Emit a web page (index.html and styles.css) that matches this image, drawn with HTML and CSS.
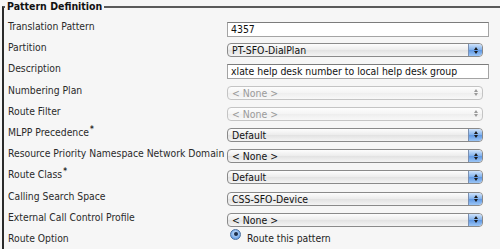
FILE: index.html
```html
<!DOCTYPE html>
<html>
<head>
<meta charset="utf-8">
<link rel="stylesheet" href="styles.css">
</head>
<body>
<fieldset class="panel">
  <legend class="legend">Pattern Definition</legend>
  <div class="form">
    <div class="label">Translation Pattern</div>
    <div class="field"><div class="input">4357</div></div>

    <div class="label">Partition</div>
    <div class="field"><div class="select"><span class="val">PT-SFO-DialPlan</span><span class="btn"><span class="up"></span><span class="down"></span></span></div></div>

    <div class="label">Description</div>
    <div class="field"><div class="input">xlate help desk number to local help desk group</div></div>

    <div class="label">Numbering Plan</div>
    <div class="field"><div class="select disabled"><span class="val">&lt; None &gt;</span><span class="btn"><span class="up"></span><span class="down"></span></span></div></div>

    <div class="label">Route Filter</div>
    <div class="field"><div class="select disabled"><span class="val">&lt; None &gt;</span><span class="btn"><span class="up"></span><span class="down"></span></span></div></div>

    <div class="label">MLPP Precedence<sup class="req">*</sup></div>
    <div class="field"><div class="select"><span class="val">Default</span><span class="btn"><span class="up"></span><span class="down"></span></span></div></div>

    <div class="label">Resource Priority Namespace Network Domain</div>
    <div class="field"><div class="select"><span class="val">&lt; None &gt;</span><span class="btn"><span class="up"></span><span class="down"></span></span></div></div>

    <div class="label">Route Class<sup class="req">*</sup></div>
    <div class="field"><div class="select"><span class="val">Default</span><span class="btn"><span class="up"></span><span class="down"></span></span></div></div>

    <div class="label">Calling Search Space</div>
    <div class="field"><div class="select"><span class="val">CSS-SFO-Device</span><span class="btn"><span class="up"></span><span class="down"></span></span></div></div>

    <div class="label">External Call Control Profile</div>
    <div class="field"><div class="select"><span class="val">&lt; None &gt;</span><span class="btn"><span class="up"></span><span class="down"></span></span></div></div>

    <div class="label">Route Option</div>
    <div class="field radio-row"><span class="radio"><span class="dot"></span></span><span class="radio-label">Route this pattern</span></div>
  </div>
</fieldset>
</body>
</html>
```

FILE: styles.css
```css
html, body {
  margin: 0;
  padding: 0;
  background: #f6f6f6;
  overflow: hidden;
  width: 500px;
  height: 249px;
}
body {
  font-family: "DejaVu Sans Condensed", "DejaVu Sans", sans-serif;
  font-stretch: condensed;
  font-size: 10.3px;
  color: #222;
}
.panel {
  margin: 0 0 0 2px;
  padding: 0 0 0 4px;
  width: 498px;
  height: 249px;
  border: 0;
  border-top: 2px solid #5a5a5a;
  border-left: 2px solid #2a2a2a;
  box-sizing: border-box;
  overflow: hidden;
}
.legend {
  font-weight: bold;
  padding: 0 2px;
  margin-left: -3px;
  font-size: 10.5px;
  line-height: 13px;
  color: #111;
}
.form {
  display: grid;
  grid-template-columns: 219px 270px;
  grid-auto-rows: 21.2px;
  margin-top: 9px;
}
.label {
  align-self: start;
  margin-top: -2px;
  line-height: 12px;
  white-space: nowrap;
  color: #2a2a2a;
}
.req {
  font-size: 8px;
  font-weight: bold;
  line-height: 0;
  vertical-align: 4px;
  margin-left: 1px;
}
.field {
  display: flex;
  align-items: flex-start;
  font-size: 10.4px;
}
.input {
  width: 262px;
  height: 15px;
  box-sizing: border-box;
  border: 1px solid #a4a4a4;
  border-top-color: #7c7c7c;
  background: #fff;
  padding: 0 3px;
  line-height: 13px;
  color: #111;
  white-space: nowrap;
}
.select {
  width: 256px;
  height: 14px;
  box-sizing: border-box;
  border: 1px solid #8a8a8a;
  border-radius: 4px;
  background: linear-gradient(#fdfdfd, #ececec 50%, #e2e2e2 51%, #f4f4f4);
  display: flex;
  align-items: center;
  overflow: hidden;
}
.val {
  flex: 1;
  padding-left: 4px;
  line-height: 12px;
  color: #111;
  white-space: nowrap;
}
.btn {
  width: 13px;
  height: 12px;
  background: linear-gradient(#cfe3fb, #7fb0ec 50%, #5e97e3 51%, #9cc6f6);
  border-left: 1px solid #7a8fb0;
  border-radius: 0 3px 3px 0;
  display: flex;
  flex-direction: column;
  align-items: center;
  justify-content: center;
  gap: 1px;
}
.up {
  width: 0; height: 0;
  border-left: 2px solid transparent;
  border-right: 2px solid transparent;
  border-bottom: 3px solid #1b1b1b;
}
.down {
  width: 0; height: 0;
  border-left: 2px solid transparent;
  border-right: 2px solid transparent;
  border-top: 3px solid #1b1b1b;
}
.select.disabled {
  border-color: #c4c4c4;
  background: linear-gradient(#fdfdfd, #f4f4f4 50%, #eeeeee 51%, #f8f8f8);
}
.select.disabled .val { color: #9a9a9a; }
.select.disabled .btn {
  background: transparent;
  border-left: 0;
}
.select.disabled .up { border-bottom-color: #9a9a9a; }
.select.disabled .down { border-top-color: #9a9a9a; }
.radio-row {
  margin-top: -2px;
  line-height: 12px;
  font-size: 10.3px;
}
.radio {
  width: 11px;
  height: 11px;
  border-radius: 50%;
  box-sizing: border-box;
  border: 1px solid #4a6f9e;
  background: radial-gradient(circle at 50% 40%, #d6e8fb, #6fa5e8 70%, #4c86d6);
  display: flex;
  align-items: center;
  justify-content: center;
  margin: -3px 0 0 3px;
}
.dot {
  width: 4px;
  height: 4px;
  border-radius: 50%;
  background: #1b2e4a;
}
.radio-label {
  margin-left: 6px;
  color: #222;
}
```
